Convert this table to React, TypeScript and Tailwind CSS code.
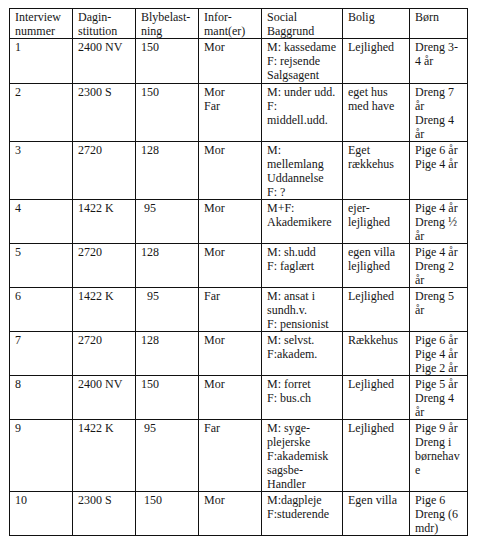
const header = [
  "Interview\nnummer",
  "Dagin-\nstitution",
  "Blybelast-\nning",
  "Infor-\nmant(er)",
  "Social\nBaggrund",
  "Bolig",
  "Børn",
];

// each row: cells + row height in px
const rows: { h: string; cells: string[] }[] = [
  { h: "h-[45px]", cells: ["1", "2400 NV", "150", "Mor", "M: kassedame\nF: rejsende\nSalgsagent", "Lejlighed", "Dreng 3-\n4 år"] },
  { h: "h-[57px]", cells: ["2", "2300 S", "150", "Mor\nFar", "M: under udd.\nF:\nmiddell.udd.", "eget hus\nmed have", "Dreng 7\når\nDreng 4\når"] },
  { h: "h-[58px]", cells: ["3", "2720", "128", "Mor", "M:\nmellemlang\nUddannelse\nF: ?", "Eget\nrækkehus", "Pige 6 år\nPige 4 år"] },
  { h: "h-[43px]", cells: ["4", "1422 K", " 95", "Mor", "M+F:\nAkademikere", "ejer-\nlejlighed", "Pige 4 år\nDreng ½\når"] },
  { h: "h-[44px]", cells: ["5", "2720", "128", "Mor", "M: sh.udd\nF: faglært", "egen villa\nlejlighed", "Pige 4 år\nDreng 2\når"] },
  { h: "h-[43px]", cells: ["6", "1422 K", "  95", "Far", "M: ansat i\nsundh.v.\nF: pensionist", "Lejlighed", "Dreng 5\når"] },
  { h: "h-[44px]", cells: ["7", "2720", "128", "Mor", "M: selvst.\nF:akadem.", "Rækkehus", "Pige 6 år\nPige 4 år\nPige 2 år"] },
  { h: "h-[44px]", cells: ["8", "2400 NV", "150", "Mor", "M: forret\nF: bus.ch", "Lejlighed", "Pige 5 år\nDreng 4\når"] },
  { h: "h-[72px]", cells: ["9", "1422 K", " 95", "Far", "M: syge-\nplejerske\nF:akademisk\nsagsbe-\nHandler", "Lejlighed", "Pige 9 år\nDreng i\nbørnehav\ne"] },
  { h: "h-[44px]", cells: ["10", "2300 S", " 150", "Mor", "M:dagpleje\nF:studerende", "Egen villa", "Pige 6\nDreng (6\nmdr)"] },
];

const widths = ["w-[63px]", "w-[63px]", "w-[63px]", "w-[63px]", "w-[81px]", "w-[67px]", "w-[58px]"];

const cell =
  "border border-[#111] align-top px-[5px] pt-[1px] pb-0 whitespace-pre text-left font-normal";

export default function App() {
  return (
    <div className="min-h-[553px] bg-white pl-[9px] pt-[8px] font-[family-name:Liberation_Serif,Times_New_Roman,serif] text-[12px] leading-[14px] text-[#161616]">
      <table className="table-fixed border-collapse w-[459px] border border-[#111]">
        <colgroup>
          {widths.map((w, i) => (
            <col key={i} className={w} />
          ))}
        </colgroup>
        <thead>
          <tr className="h-[30px]">
            {header.map((t) => (
              <th key={t} className={cell}>
                {t}
              </th>
            ))}
          </tr>
        </thead>
        <tbody>
          {rows.map((r) => (
            <tr key={r.cells[0]} className={r.h}>
              {r.cells.map((c, i) => (
                <td key={i} className={cell}>
                  {c}
                </td>
              ))}
            </tr>
          ))}
        </tbody>
      </table>
    </div>
  );
}
